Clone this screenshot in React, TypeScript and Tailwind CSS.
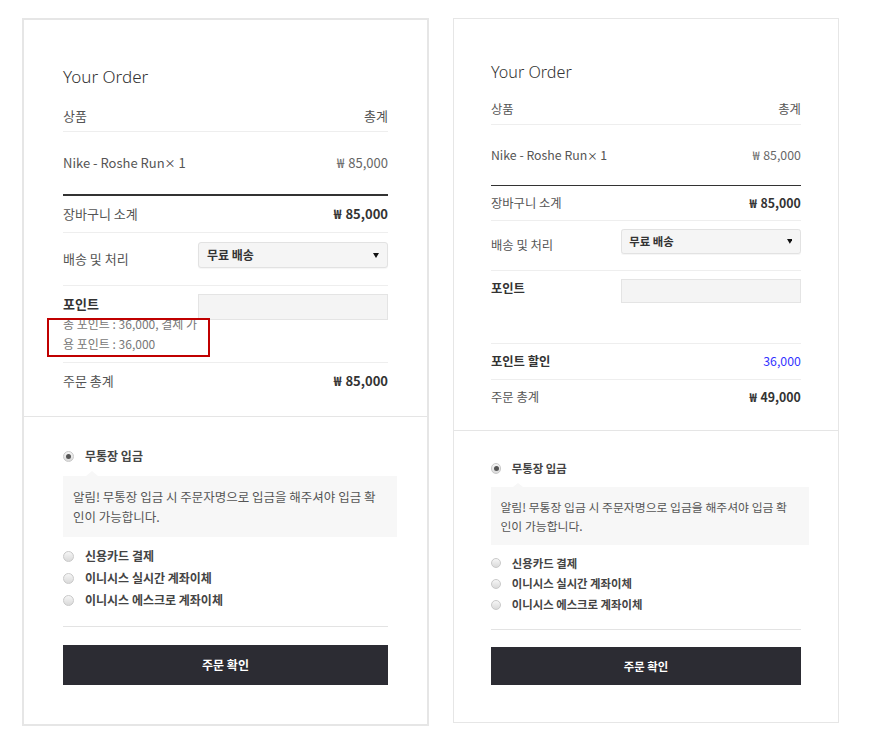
import React from 'react'

type Variant = 'note' | 'applied'

const Radio = ({ checked = false }: { checked?: boolean }) => (
  <span className="flex h-[11px] w-[11px] shrink-0 items-center justify-center rounded-full border border-[#c9c9c9] bg-linear-to-b from-[#f6f6f6] to-[#dadada]">
    {checked && <span className="h-[5px] w-[5px] rounded-full bg-[#555]" />}
  </span>
)

const Won = ({ amount }: { amount: string }) => (
  <>
    <span className="mr-[4px]">₩</span>
    {amount}
  </>
)

const OrderCard = ({ variant }: { variant: Variant }) => {
  const payments = ['신용카드 결제', '이니시스 실시간 계좌이체', '이니시스 에스크로 계좌이체']

  return (
    <div className="relative w-[407px] border-2 border-[#e6e6e6] bg-white">
      {/* Order review */}
      <div className="border-b border-[#e5e5e5] px-[39px] pb-[25px] pt-[40px]">
        <h2 className="h-[33px] font-['Noto_Sans','Noto_Sans_CJK_KR',sans-serif] text-[17px] font-light leading-[33px] text-[#333]">
          Your Order
        </h2>

        <div className="flex h-[39px] items-center justify-between border-b border-[#eee] pt-[7px] text-[13px] text-[#555]">
          <span>상품</span>
          <span>총계</span>
        </div>

        <div className="flex h-[64px] items-center justify-between border-b-2 border-[#333] text-[13px] text-[#555]">
          <span>
            Nike - Roshe Run<span className="text-[11px] text-[#333]">×</span> 1
          </span>
          <span className="text-[#666]">
            <Won amount="85,000" />
          </span>
        </div>

        <div className="flex h-[37px] items-center justify-between border-b border-[#eee] text-[13px]">
          <span className="text-[#555]">장바구니 소계</span>
          <span className="font-bold text-[#333]">
            <Won amount="85,000" />
          </span>
        </div>

        <div className="flex h-[53px] items-start justify-between border-b border-[#eee] pt-[9px] text-[13px]">
          <span className="mt-[7px] leading-5 text-[#555]">배송 및 처리</span>
          <div className="flex h-[26px] w-[190px] items-center justify-between rounded-[3px] border border-[#e2e2e2] bg-[#f5f5f5] pl-[8px] pr-[8px] shadow-[0_1px_1px_rgba(0,0,0,0.04)]">
            <span className="text-[12px] font-bold text-[#333]">무료 배송</span>
            <svg width="6" height="5" viewBox="0 0 6 5">
              <polygon points="0,0 6,0 3,5" fill="#111" />
            </svg>
          </div>
        </div>

        <div className="flex h-[77px] items-start justify-between border-b border-[#eee] pt-[8px]">
          <div className="relative w-[135px]">
            <div className="text-[13px] font-bold leading-5 text-[#333]">포인트</div>
            {variant === 'note' && (
              <>
                <p className="w-[140px] text-[12px] leading-5 text-[#777]">
                  총 포인트 : 36,000, 결제 가용 포인트 : 36,000
                </p>
                <div className="absolute left-[-16px] top-[24px] h-[39px] w-[163px] border-2 border-[#c00000]" />
              </>
            )}
          </div>
          <div className="h-[26px] w-[190px] border border-[#e4e4e4] bg-[#f4f4f4]" />
        </div>

        {variant === 'applied' && (
          <div className="flex h-[38px] items-center justify-between border-b border-[#eee] text-[13px]">
            <span className="font-bold text-[#333]">포인트 할인</span>
            <span className="text-[#3333ff]">36,000</span>
          </div>
        )}

        <div className="flex items-center justify-between pt-[8px] text-[13px] leading-5">
          <span className="text-[#555]">주문 총계</span>
          <span className="font-bold text-[#333]">
            <Won amount={variant === 'note' ? '85,000' : '49,000'} />
          </span>
        </div>
      </div>

      {/* Payment */}
      <div className="px-[39px] pb-[39px] pt-[29px]">
        <div className="flex h-5 items-center gap-[11px] text-[12px] font-bold text-[#444]">
          <Radio checked />
          <span>무통장 입금</span>
        </div>

        <div className="relative mr-[-9px] mt-[10px] bg-[#f7f7f7] pb-[10px] pl-[10px] pr-[18px] pt-[11px] text-[12.5px] leading-5 text-[#555]">
          <span className="absolute left-[23px] top-[-5px] h-0 w-0 border-x-[6px] border-b-[5px] border-x-transparent border-b-[#f7f7f7]" />
          알림! 무통장 입금 시 주문자명으로 입금을 해주셔야 입금 확인이 가능합니다.
        </div>

        <ul className="mt-2">
          {payments.map((name) => (
            <li key={name} className="flex h-[22px] items-center gap-[11px] text-[12px] font-bold text-[#444]">
              <Radio />
              <span>{name}</span>
            </li>
          ))}
        </ul>

        <div className="mt-[15px] h-px bg-[#e3e3e3]" />

        <button className="mt-[18px] flex h-[40px] w-full items-center justify-center bg-[#2c2c33] text-[12px] font-bold text-white">
          주문 확인
        </button>
      </div>
    </div>
  )
}

export default function App() {
  return (
    <div className="flex min-h-[746px] items-start gap-[24px] bg-white pl-[22px] pt-[18px] font-['Noto_Sans_CJK_KR',sans-serif]">
      <OrderCard variant="note" />
      <div className="[zoom:0.948]">
        <OrderCard variant="applied" />
      </div>
    </div>
  )
}
